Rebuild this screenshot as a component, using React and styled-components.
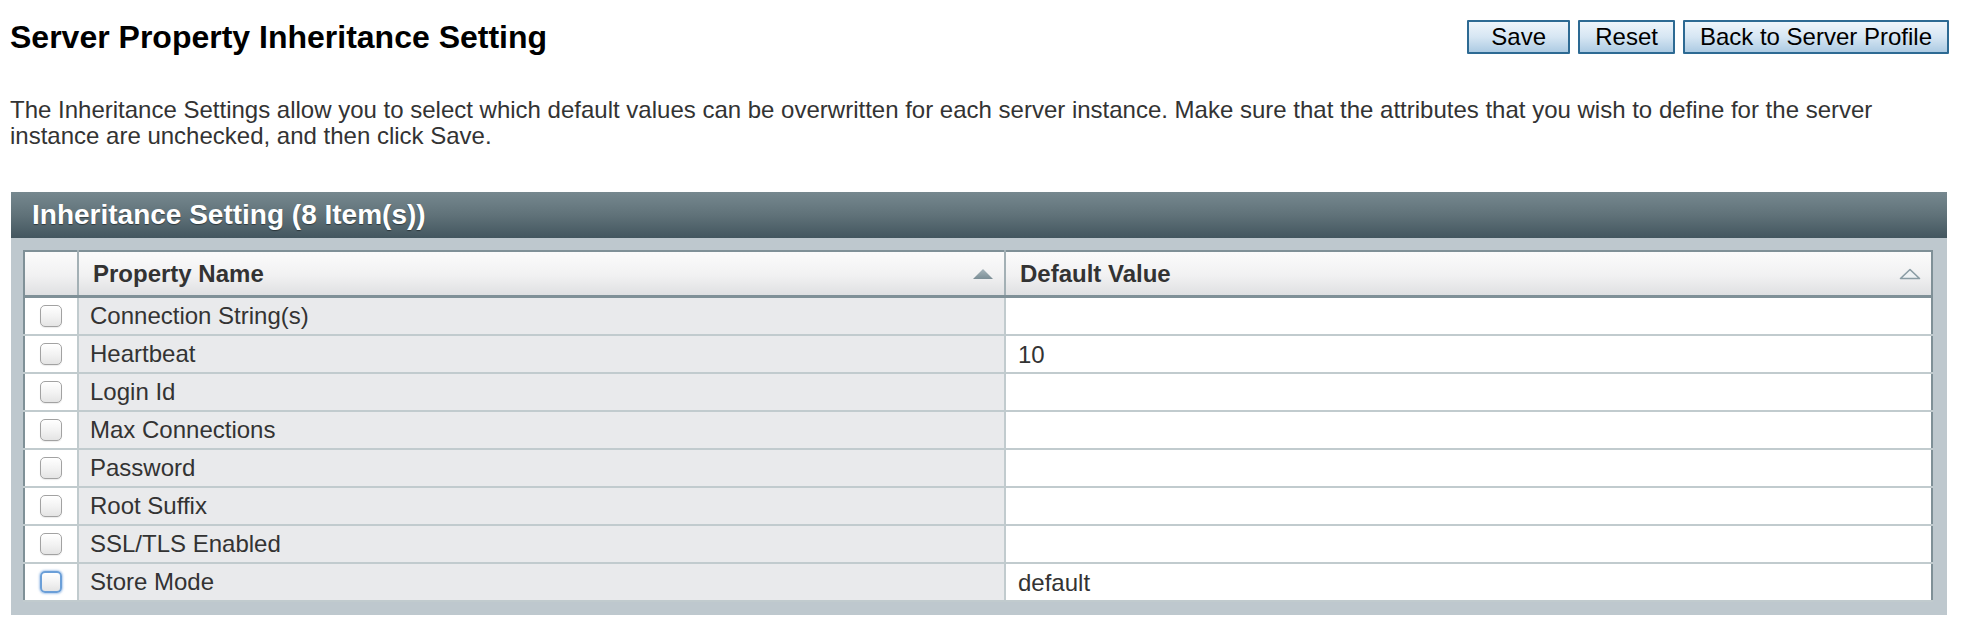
import React from 'react';
import styled, { createGlobalStyle } from 'styled-components';

const GlobalStyle = createGlobalStyle`
  html, body { margin: 0; padding: 0; background: #ffffff; }
  body { font-family: "Liberation Sans", Arial, Helvetica, sans-serif; color: #333; }
`;

const Page = styled.div`
  padding: 18px 16px 20px 10px;
`;

const TopBar = styled.div`
  display: flex;
  align-items: center;
  justify-content: space-between;
  height: 38px;
`;

const Title = styled.h1`
  margin: 0;
  font-size: 32px;
  line-height: 38px;
  font-weight: bold;
  color: #000;
`;

const ButtonGroup = styled.div`
  display: flex;
  gap: 8px;
`;

const Button = styled.button`
  height: 34px;
  min-width: ${p => p.$minWidth || 0}px;
  padding: 0 15px;
  border: 2px solid #2d6a93;
  border-radius: 1px;
  background: linear-gradient(to bottom, #eef5fb 0%, #d6e6f3 50%, #adcbe3 100%);
  font-family: "Liberation Sans", Arial, Helvetica, sans-serif;
  font-size: 24px;
  line-height: 28px;
  color: #000;
  cursor: pointer;
`;

const Intro = styled.p`
  margin: 41px 0 0;
  font-size: 24px;
  line-height: 26px;
  color: #333;
`;

const Panel = styled.section`
  margin: 43px 2px 0 1px;
  background: #bec8ce;
`;

const PanelTitle = styled.div`
  height: 46px;
  display: flex;
  align-items: center;
  padding-left: 21px;
  background: linear-gradient(to bottom, #76888f 0%, #607279 50%, #43565f 100%);
  color: #fff;
  font-size: 28px;
  font-weight: bold;
  text-shadow: 0 1px 1px rgba(0, 0, 0, 0.45);
`;

const PanelBody = styled.div`
  padding: 12px 14px 13px 12px;
`;

const Table = styled.table`
  width: 100%;
  border-collapse: collapse;
  table-layout: fixed;
  border: 2px solid #7f9097;
  background: #fff;
`;

const HeadCell = styled.th`
  height: 43px;
  padding: 0 ${p => (p.$check ? 0 : 10)}px 0 ${p => (p.$check ? 0 : 14)}px;
  text-align: left;
  font-size: 24px;
  font-weight: bold;
  color: #333;
  background: linear-gradient(to bottom, #fbfbfb 0%, #f1f1f2 55%, #dfe0e2 100%);
  border-bottom: 3px solid #7f9097;
  border-left: ${p => (p.$first ? 'none' : '2px solid #a3b0b5')};
`;

const HeadInner = styled.div`
  display: flex;
  align-items: center;
  justify-content: space-between;
`;

const Row = styled.tr``;

const Cell = styled.td`
  box-sizing: border-box;
  height: 38px;
  padding: ${p => (p.$value ? '3px 10px 0 12px' : p.$check ? '0' : '0 10px 0 11px')};
  font-size: 24px;
  line-height: 28px;
  color: #333;
  white-space: nowrap;
  background: ${p => (p.$name ? '#e9eaec' : '#fff')};
  border-bottom: 2px solid #c1cbce;
  border-left: ${p => (p.$check ? 'none' : '2px solid #c1cbce')};
  text-align: ${p => (p.$check ? 'center' : 'left')};
  vertical-align: middle;
`;

const Check = styled.span`
  display: inline-block;
  vertical-align: middle;
  box-sizing: border-box;
  width: 22px;
  height: 22px;
  border-radius: 5px;
  border: ${p => (p.$focus ? '2px solid #6b9fd8' : '1px solid #a2a2a2')};
  background: linear-gradient(to bottom, #ffffff 0%, #f3f3f3 50%, #e4e4e4 100%);
  box-shadow: ${p =>
    p.$focus ? '0 0 2px 1px rgba(110, 160, 220, 0.55)' : 'inset 0 1px 0 #fff, 0 1px 1px rgba(0,0,0,0.08)'};
  margin-top: -2px;
`;

const SortArrow = ({ outline }) => (
  <svg width="22" height="12" viewBox="0 0 22 12" aria-hidden="true">
    <defs>
      <linearGradient id="sortFill" x1="0" y1="0" x2="0" y2="1">
        <stop offset="0" stopColor="#a6b5bb" />
        <stop offset="1" stopColor="#7b8e96" />
      </linearGradient>
    </defs>
    {outline ? (
      <polygon points="1.5,10.5 11,1.5 20.5,10.5" fill="#eef2f4" stroke="#8a9ca4" strokeWidth="1.6" strokeLinejoin="round" />
    ) : (
      <polygon points="1,11 11,1 21,11" fill="url(#sortFill)" />
    )}
  </svg>
);

const rows = [
  { name: 'Connection String(s)', value: '' },
  { name: 'Heartbeat', value: '10' },
  { name: 'Login Id', value: '' },
  { name: 'Max Connections', value: '' },
  { name: 'Password', value: '' },
  { name: 'Root Suffix', value: '' },
  { name: 'SSL/TLS Enabled', value: '' },
  { name: 'Store Mode', value: 'default', focus: true },
];

export default function App() {
  return (
    <>
      <GlobalStyle />
      <Page>
        <TopBar>
          <Title>Server Property Inheritance Setting</Title>
          <ButtonGroup>
            <Button $minWidth={103}>Save</Button>
            <Button>Reset</Button>
            <Button>Back to Server Profile</Button>
          </ButtonGroup>
        </TopBar>
        <Intro>
          The Inheritance Settings allow you to select which default values can be overwritten for each server
          instance. Make sure that the attributes that you wish to define for the server instance are unchecked, and
          then click Save.
        </Intro>
        <Panel>
          <PanelTitle>Inheritance Setting (8 Item(s))</PanelTitle>
          <PanelBody>
            <Table>
              <colgroup>
                <col style={{ width: '54px' }} />
                <col />
                <col />
              </colgroup>
              <thead>
                <tr>
                  <HeadCell $check $first />
                  <HeadCell>
                    <HeadInner>
                      <span>Property Name</span>
                      <SortArrow />
                    </HeadInner>
                  </HeadCell>
                  <HeadCell>
                    <HeadInner>
                      <span>Default Value</span>
                      <SortArrow outline />
                    </HeadInner>
                  </HeadCell>
                </tr>
              </thead>
              <tbody>
                {rows.map(r => (
                  <Row key={r.name}>
                    <Cell $check>
                      <Check $focus={r.focus} />
                    </Cell>
                    <Cell $name>{r.name}</Cell>
                    <Cell $value>{r.value}</Cell>
                  </Row>
                ))}
              </tbody>
            </Table>
          </PanelBody>
        </Panel>
      </Page>
    </>
  );
}
